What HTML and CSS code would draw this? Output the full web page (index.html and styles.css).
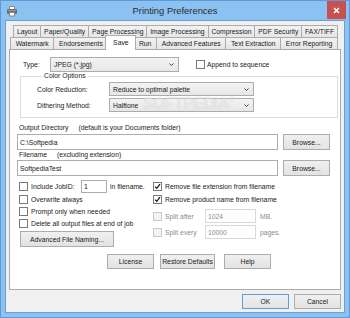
FILE: index.html
```html
<!DOCTYPE html>
<html>
<head>
<meta charset="utf-8">
<title>Printing Preferences</title>
<link rel="stylesheet" href="styles.css">
</head>
<body>
<div class="window">
  <div class="titlebar">
    <div class="tb-left">
      <svg class="appicon" width="10" height="11" viewBox="0 0 10 11">
        <rect x="2.5" y="0.5" width="5" height="3" fill="#fff" stroke="#8a8a8a"/>
        <rect x="0" y="3" width="10" height="5" rx="1" fill="#6d6d6d"/>
        <rect x="1" y="4" width="8" height="1" fill="#9a9a9a"/>
        <rect x="2.5" y="6.5" width="5" height="3.5" fill="#fff" stroke="#8a8a8a"/>
      </svg>
    </div>
    <div class="title">Printing Preferences</div>
    <div class="tb-right">
      <div class="close">
        <svg width="7" height="7" viewBox="0 0 7 7"><path d="M1 1L6 6M6 1L1 6" stroke="#fff" stroke-width="1.6"/></svg>
      </div>
    </div>
  </div>

  <div class="client">
    <div class="tabrow r1">
      <div class="tab">Layout</div>
      <div class="tab">Paper/Quality</div>
      <div class="tab">Page Processing</div>
      <div class="tab">Image Processing</div>
      <div class="tab">Compression</div>
      <div class="tab">PDF Security</div>
      <div class="tab">FAX/TIFF</div>
    </div>
    <div class="tabrow r2">
      <div class="tab">Watermark</div>
      <div class="tab">Endorsements</div>
      <div class="tab sel">Save</div>
      <div class="tab">Run</div>
      <div class="tab">Advanced Features</div>
      <div class="tab">Text Extraction</div>
      <div class="tab">Error Reporting</div>
    </div>

    <div class="panel">
      <div class="typerow">
        <span class="lbl-type">Type:</span>
        <div class="select sel-type"><span>JPEG (*.jpg)</span><svg class="chev" width="5" height="3" viewBox="0 0 5 3"><path d="M0.5 0.5L2.5 2.5L4.5 0.5" fill="none" stroke="#333" stroke-width="0.9"/></svg></div>
        <div class="check append"><span class="cb"></span><span>Append to sequence</span></div>
      </div>

      <fieldset class="group">
        <legend>Color Options</legend>
        <div class="grow">
          <span class="glbl">Color Reduction:</span>
          <div class="select sel-group"><span>Reduce to optimal palette</span><svg class="chev" width="5" height="3" viewBox="0 0 5 3"><path d="M0.5 0.5L2.5 2.5L4.5 0.5" fill="none" stroke="#333" stroke-width="0.9"/></svg></div>
        </div>
        <div class="grow">
          <span class="glbl">Dithering Method:</span>
          <div class="select sel-group"><span>Halftone</span><svg class="chev" width="5" height="3" viewBox="0 0 5 3"><path d="M0.5 0.5L2.5 2.5L4.5 0.5" fill="none" stroke="#333" stroke-width="0.9"/></svg></div>
        </div>
      </fieldset>

      <div class="flabel first">Output Directory<span class="hint">(default is your Documents folder)</span></div>
      <div class="pathrow">
        <div class="input path">C:\Softpedia</div>
        <div class="btn browse">Browse...</div>
      </div>
      <div class="flabel">Filename<span class="hint">(excluding extension)</span></div>
      <div class="pathrow">
        <div class="input path">SoftpediaTest</div>
        <div class="btn browse">Browse...</div>
      </div>

      <div class="options">
        <div class="col left">
          <div class="orow first">
            <span class="cb"></span><span class="jl">Include JobID:</span>
            <div class="input jobid">1</div>
            <span class="inf">in filename.</span>
          </div>
          <div class="orow"><span class="cb"></span><span>Overwrite always</span></div>
          <div class="orow"><span class="cb"></span><span>Prompt only when needed</span></div>
          <div class="orow"><span class="cb"></span><span>Delete all output files at end of job</span></div>
          <div class="btn adv">Advanced File Naming...</div>
        </div>
        <div class="col right">
          <div class="orow first"><span class="cb on"><svg width="7" height="7" viewBox="0 0 7 7"><path d="M1 3.6L2.8 5.4L6 1.2" fill="none" stroke="#111" stroke-width="1.2"/></svg></span><span>Remove file extension from filename</span></div>
          <div class="orow"><span class="cb on"><svg width="7" height="7" viewBox="0 0 7 7"><path d="M1 3.6L2.8 5.4L6 1.2" fill="none" stroke="#111" stroke-width="1.2"/></svg></span><span>Remove product name from filename</span></div>
          <div class="orow split s1"><span class="cb dis"></span><span class="sl">Split after</span><div class="input dis sin">1024</div><span class="unit">MB.</span></div>
          <div class="orow split s2"><span class="cb dis"></span><span class="sl">Split every</span><div class="input dis sin">10000</div><span class="unit">pages.</span></div>
        </div>
      </div>

      <div class="panelbtns">
        <div class="btn lic">License</div>
        <div class="btn rd">Restore Defaults</div>
        <div class="btn help">Help</div>
      </div>

      <div class="watermark">SOFTPEDIA<span class="reg">®</span></div>
    </div>

    <div class="dlgbtns">
      <div class="btn dlg def">OK</div>
      <div class="btn dlg">Cancel</div>
    </div>
  </div>
</div>
</body>
</html>
```

FILE: styles.css
```css
html, body {
  margin: 0;
  padding: 0;
}
body {
  width: 350px;
  height: 318px;
  overflow: hidden;
  font-family: "Liberation Sans", Arial, sans-serif;
  font-size: 6.8px;
  color: #1a1a1a;
}

.window {
  width: 350px;
  height: 318px;
  box-sizing: border-box;
  border: 1px solid #5f9ad6;
  background: #8cc2f2;
  display: flex;
  flex-direction: column;
}

/* title bar */
.titlebar {
  height: 19px;
  flex: none;
  display: grid;
  grid-template-columns: 1fr auto 1fr;
  align-items: center;
}
.tb-left {
  display: flex;
  align-items: center;
}
.appicon {
  margin-left: 6px;
  margin-top: 1px;
}
.title {
  font-size: 9.4px;
  color: #2a2a2a;
  line-height: 19px;
}
.tb-right {
  display: flex;
  justify-content: flex-end;
  align-self: start;
}
.close {
  width: 19px;
  height: 18px;
  margin-right: 3px;
  background: #c75050;
  display: flex;
  align-items: center;
  justify-content: center;
}

/* client */
.client {
  flex: 1;
  margin: 0 4px 4px;
  border: 1px solid #6d9fd6;
  background: #f0f0f0;
  padding: 4px 3px 0;
  display: flex;
  flex-direction: column;
}

/* tabs */
.tabrow {
  display: flex;
  height: 12px;
  padding-right: 4px;
  align-items: flex-start;
}
.tabrow.r1 { margin-left: 4px; }
.tabrow.r2 { margin-left: 1px; }
.tab {
  flex: 1 1 auto;
  height: 12px;
  box-sizing: border-box;
  border: 1px solid #acacac;
  border-bottom: none;
  margin-right: -1px;
  background: linear-gradient(#f2f2f2, #e6e6e6);
  text-align: center;
  line-height: 12px;
  white-space: nowrap;
  padding: 0 2px;
}
.tab.sel {
  position: relative;
  z-index: 1;
  height: 15px;
  margin: -2px -3px 0 -2px;
  padding: 0 4px;
  background: #fff;
  line-height: 14px;
}

/* panel */
.panel {
  position: relative;
  height: 241px;
  box-sizing: border-box;
  border: 1px solid #acacac;
  background: #fff;
}

.select {
  display: flex;
  align-items: center;
  box-sizing: border-box;
  border: 1px solid #acacac;
  background: linear-gradient(#f3f3f3, #e7e7e7);
  padding-left: 3px;
  white-space: nowrap;
}
.chev {
  margin-left: auto;
  margin-right: 4px;
  flex: none;
}

.typerow {
  display: flex;
  align-items: center;
  height: 15px;
  margin-top: 7px;
  padding-left: 13px;
}
.lbl-type { width: 27px; }
.sel-type {
  width: 129px;
  height: 15px;
}
.check {
  display: flex;
  align-items: center;
  gap: 2px;
}
.append { margin-left: 17px; }

.cb {
  width: 9px;
  height: 9px;
  box-sizing: border-box;
  border: 1px solid #7a7a7a;
  background: #fff;
  flex: none;
  display: flex;
  align-items: center;
  justify-content: center;
}
.cb.dis {
  border-color: #c8c8c8;
  background: #f3f3f3;
}

.group {
  margin: 0 2px 0 10px;
  padding: 2px 0 5px 16px;
  border: 1px solid #dcdcdc;
  min-width: 0;
}
.group legend {
  margin-left: 5px;
  padding: 0 2px;
  line-height: 8px;
}
.grow {
  display: flex;
  align-items: center;
  height: 14px;
}
.grow + .grow { margin-top: 2px; }
.glbl { width: 72px; }
.sel-group {
  width: 145px;
  height: 14px;
}

.flabel {
  height: 10px;
  line-height: 10px;
  padding-left: 9px;
  white-space: nowrap;
}
.flabel.first {
  margin-top: 5px;
  margin-bottom: 1px;
}
.hint { margin-left: 10px; }

.pathrow {
  display: flex;
  align-items: center;
  height: 16px;
  padding-left: 7px;
  gap: 5px;
}
.input {
  box-sizing: border-box;
  border: 1px solid #abadb3;
  background: #fff;
  padding-left: 2px;
  display: flex;
  align-items: center;
  white-space: nowrap;
}
.input.path {
  width: 261px;
  height: 16px;
}

.btn {
  box-sizing: border-box;
  border: 1px solid #acacac;
  background: linear-gradient(#f0f0f0, #e3e3e3);
  display: flex;
  align-items: center;
  justify-content: center;
  white-space: nowrap;
}
.browse {
  width: 47px;
  height: 16px;
}

.options {
  display: grid;
  grid-template-columns: 143px 1fr;
  margin-top: 3px;
}
.col.left { padding-left: 9px; }
.orow {
  display: flex;
  align-items: center;
  height: 12px;
  gap: 3px;
  white-space: nowrap;
}
.orow.first { height: 14px; }
.jl { width: 47px; }
.input.jobid {
  width: 26px;
  height: 13px;
}
.inf { margin-left: 0; }

.adv {
  width: 94px;
  height: 16px;
  margin: 2px 0 0 1px;
}

.split { height: 14px; }
.split.s1 { margin-top: 4px; }
.split.s2 { margin-top: 2px; }
.split .sl {
  width: 37px;
  color: #8c8c8c;
}
.input.dis {
  border-color: #d9d9d9;
  color: #8c8c8c;
}
.input.sin {
  width: 51px;
  height: 14px;
}
.unit {
  color: #8c8c8c;
  margin-left: 1px;
}

.panelbtns {
  display: flex;
  margin: 7px 0 0 97px;
}
.panelbtns .btn { height: 15px; }
.lic { width: 47px; }
.rd { width: 55px; margin-left: 6px; }
.help { width: 47px; margin-left: 9px; }

.watermark {
  position: absolute;
  left: 133px;
  top: 45px;
  font-size: 16px;
  font-weight: bold;
  letter-spacing: -0.6px;
  color: rgba(255, 255, 255, 0.55);
  text-shadow: 0 0 1px rgba(0, 0, 0, 0.16);
  pointer-events: none;
  white-space: nowrap;
}
.watermark .reg {
  font-size: 7px;
  vertical-align: top;
}

/* dialog buttons */
.dlgbtns {
  display: flex;
  justify-content: flex-end;
  gap: 5px;
  margin-top: 4px;
}
.btn.dlg {
  width: 47px;
  height: 15px;
}
.btn.def {
  border-color: #5aa0e0;
}
```
